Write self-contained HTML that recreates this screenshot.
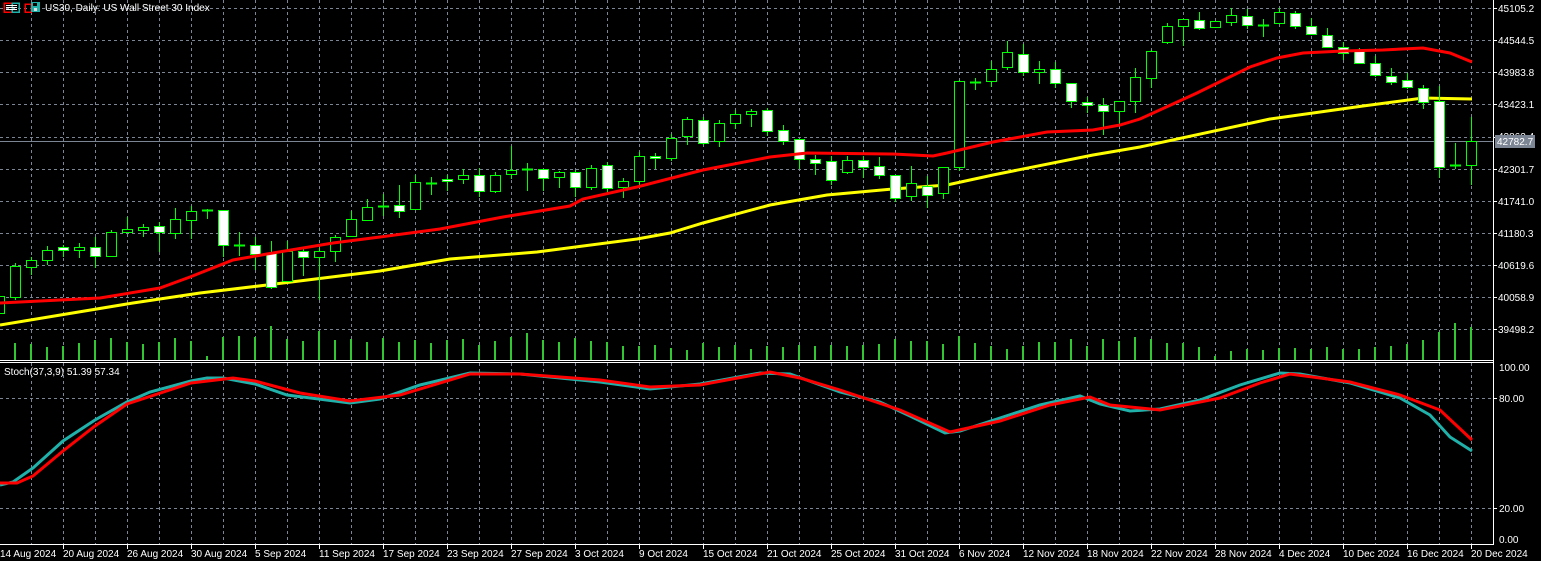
<!DOCTYPE html>
<html><head><meta charset="utf-8"><style>
html,body{margin:0;padding:0;background:#000;width:1541px;height:561px;overflow:hidden}
svg{display:block}
text{font-family:"Liberation Sans",sans-serif;font-size:10px;fill:#fff}
</style></head><body>
<svg id="s" width="1541" height="561" viewBox="0 0 1541 561" xmlns="http://www.w3.org/2000/svg" shape-rendering="crispEdges">
<g id="grid" stroke="#7b8594" stroke-width="1" stroke-dasharray="3,3"></g>
<g id="vol" fill="#32c832"></g>
<line x1="0" y1="141.5" x2="1493" y2="141.5" stroke="#7b8594"/>
<polyline id="yel" fill="none" stroke="#ffff00" stroke-width="3" shape-rendering="auto"/>
<g id="cdl"></g>
<polyline id="red" fill="none" stroke="#ff0000" stroke-width="3" shape-rendering="auto"/>
<polyline id="stT" fill="none" stroke="#20b2aa" stroke-width="3" shape-rendering="auto"/>
<polyline id="stR" fill="none" stroke="#ff0000" stroke-width="3" shape-rendering="auto"/>
<g stroke="#fff" stroke-width="1">
<line x1="0" y1="360.5" x2="1493" y2="360.5"/>
<line x1="0" y1="362.5" x2="1493" y2="362.5"/>
<line x1="0" y1="544.5" x2="1494" y2="544.5"/>
<line x1="1493.5" y1="0" x2="1493.5" y2="545"/>
</g>
<g id="ticks" stroke="#fff"></g>
<!-- header icons -->
<rect x="4" y="3" width="8" height="9" fill="none" stroke="#ff0000" stroke-width="1.5"/>
<rect x="12" y="3" width="7" height="9" fill="none" stroke="#20b2aa" stroke-width="1.5"/>
<line x1="6" y1="5.5" x2="17" y2="5.5" stroke="#fff"/><line x1="6" y1="7.5" x2="17" y2="7.5" stroke="#fff"/><line x1="6" y1="9.5" x2="17" y2="9.5" stroke="#fff"/>
<rect x="25" y="4" width="6" height="8" fill="none" stroke="#ff0000" stroke-width="1.5"/>
<rect x="31" y="2" width="9" height="10" fill="#20b2aa"/>
<rect x="33" y="3" width="4" height="3" fill="#000"/><rect x="34" y="8" width="3" height="3" fill="#ddd"/>
<text x="45" y="11">US30, Daily:  US Wall Street 30 Index</text>
<!-- price axis -->
<g>
<text x="1498" y="12">45105.2</text>
<text x="1498" y="44">44544.5</text>
<text x="1498" y="76">43983.8</text>
<text x="1498" y="108">43423.1</text>
<text x="1498" y="140">42862.4</text>
<text x="1498" y="173">42301.7</text>
<text x="1498" y="205">41741.0</text>
<text x="1498" y="237">41180.3</text>
<text x="1498" y="269">40619.6</text>
<text x="1498" y="301">40058.9</text>
<text x="1498" y="333">39498.2</text>
</g>
<rect x="1495" y="135" width="40" height="13" fill="#7b8594"/>
<text x="1497" y="145" style="fill:#fff">42782.7</text>
<text x="4" y="375">Stoch(37,3,9) 51.39 57.34</text>
<text x="1499" y="371">100.00</text>
<text x="1499" y="402">80.00</text>
<text x="1499" y="512">20.00</text>
<text x="1499" y="543">0.00</text>
<g>
<text x="0" y="557">14 Aug 2024</text>
<text x="63" y="557">20 Aug 2024</text>
<text x="127" y="557">26 Aug 2024</text>
<text x="191" y="557">30 Aug 2024</text>
<text x="255" y="557">5 Sep 2024</text>
<text x="319" y="557">11 Sep 2024</text>
<text x="383" y="557">17 Sep 2024</text>
<text x="447" y="557">23 Sep 2024</text>
<text x="511" y="557">27 Sep 2024</text>
<text x="575" y="557">3 Oct 2024</text>
<text x="639" y="557">9 Oct 2024</text>
<text x="703" y="557">15 Oct 2024</text>
<text x="767" y="557">21 Oct 2024</text>
<text x="831" y="557">25 Oct 2024</text>
<text x="895" y="557">31 Oct 2024</text>
<text x="959" y="557">6 Nov 2024</text>
<text x="1023" y="557">12 Nov 2024</text>
<text x="1087" y="557">18 Nov 2024</text>
<text x="1151" y="557">22 Nov 2024</text>
<text x="1215" y="557">28 Nov 2024</text>
<text x="1279" y="557">4 Dec 2024</text>
<text x="1343" y="557">10 Dec 2024</text>
<text x="1407" y="557">16 Dec 2024</text>
<text x="1471" y="557">20 Dec 2024</text>
</g>
</svg>
<script>
var NS="http://www.w3.org/2000/svg";
function el(p,t,a){var e=document.createElementNS(NS,t);for(var k in a)e.setAttribute(k,a[k]);p.appendChild(e);return e;}
var g=document.getElementById('grid');
for(var x=31;x<=1471;x+=32){el(g,'line',{x1:x+.5,y1:0,x2:x+.5,y2:360});el(g,'line',{x1:x+.5,y1:363,x2:x+.5,y2:544});}
[8,40,72,104,137,169,201,233,265,297,329].forEach(function(y){el(g,'line',{x1:0,y1:y+.5,x2:1493,y2:y+.5});});
[398,508].forEach(function(y){el(g,'line',{x1:0,y1:y+.5,x2:1493,y2:y+.5});});
var tk=document.getElementById('ticks');
[8,40,72,104,137,169,201,233,265,297,329,398,508].forEach(function(y){el(tk,'line',{x1:1493,y1:y+.5,x2:1497,y2:y+.5});});
for(var x=63;x<=1471;x+=64){el(tk,'line',{x1:x+.5,y1:544,x2:x+.5,y2:549});}
// candles: [top,bottom,high,low,bear]
var C=[[296,313,294,318,0],[266,297,263,300,0],[260,267,257,275,0],[250,260,246,265,0],[247,250,245,257,1],[247,250,243,258,0],[247,256,237,268,1],[232,256,230,256,0],[229,232,217,233,0],[227,230,224,237,0],[226,232,222,252,1],[219,233,208,239,0],[211,220,206,239,0],[210,211,209,219,0],[210,245,210,257,1],[245,246,232,256,0],[245,254,237,270,1],[253,287,241,289,1],[251,281,241,281,0],[251,257,248,276,1],[251,257,248,300,0],[237,251,235,262,0],[219,236,211,237,0],[207,220,199,221,0],
[206,207,194,216,0],[205,211,185,218,1],[182,209,175,210,0],[183,184,177,195,0],[179,181,175,191,1],[175,179,169,184,0],[175,191,168,197,1],[175,191,172,193,0],[170,174,146,179,0],[169,170,163,191,0],[169,178,169,191,1],[172,177,171,188,0],[172,187,170,197,1],[168,187,165,190,0],[165,188,162,193,1],[181,187,178,198,0],[156,181,152,185,0],[156,158,153,169,1],[138,158,134,161,0],[119,136,117,145,0],[120,143,117,145,1],[123,141,120,147,0],[114,123,110,129,0],[111,114,109,127,0],[110,131,108,136,1],
[130,141,125,145,1],[139,159,139,169,1],[159,163,155,175,1],[161,180,156,185,1],[160,172,156,174,0],[160,167,156,178,1],[166,175,157,179,1],[175,198,175,202,1],[183,196,166,201,0],[186,195,176,208,1],[167,193,167,199,0],[81,167,80,171,0],[82,83,78,90,0],[69,81,61,87,0],[52,67,41,70,0],[54,72,44,76,1],[69,72,61,84,0],[69,83,62,88,1],[83,101,83,108,1],[102,105,97,113,1],[105,111,98,135,1],[101,111,101,125,0],[77,101,68,113,0],
[51,78,50,88,0],[26,42,23,44,0],[19,26,19,46,0],[20,28,12,30,1],[21,27,21,28,0],[15,22,8,26,0],[16,25,9,29,1],[25,26,19,37,0],[12,23,8,24,0],[13,26,11,29,1],[26,34,18,35,1],[35,47,28,48,1],[47,53,42,60,1],[51,63,48,63,1],[63,75,56,77,1],[76,82,68,85,1],[80,87,73,89,1],[88,102,85,109,1],[101,167,86,178,1],[165,166,143,169,0],[141,165,117,185,0]];
var cg=document.getElementById('cdl');
C.forEach(function(c,i){var x=16*i-1;
 el(cg,'line',{x1:x+.5,y1:c[2],x2:x+.5,y2:c[0],stroke:'#00ff00'});
 el(cg,'line',{x1:x+.5,y1:c[1],x2:x+.5,y2:c[3],stroke:'#00ff00'});
 var h=c[1]-c[0];
 if(h<=1){el(cg,'line',{x1:x-5,y1:c[0]+.5,x2:x+6,y2:c[0]+.5,stroke:'#00ff00',"stroke-width":2});}
 else el(cg,'rect',{x:x-4.5,y:c[0]+.5,width:10,height:h,fill:c[4]?'#fff':'#000',stroke:'#00ff00'});
});
var V=[345,343,344,347,346,343,340,338,342,344,342,338,341,356,337,336,337,326,339,341,331,340,339,342,338,342,340,343,340,339,345,341,337,333,340,342,338,341,342,346,346,345,348,350,343,347,345,349,346,347,345,346,345,346,345,344,339,341,341,344,336,343,346,349,346,342,342,339,346,339,341,337,339,343,343,347,356,351,349,350,348,348,349,347,349,349,347,346,344,340,332,323,327];
var vg=document.getElementById('vol');
V.forEach(function(t,i){var x=16*i-1;el(vg,'rect',{x:x-1,y:t,width:2,height:360-t});});
function pl(id,pts){document.getElementById(id).setAttribute('points',pts.map(function(p){return p.join(',')}).join(' '));}
pl('red',[[0,303],[40,301],[100,298],[160,288],[190,277],[233,260],[267,254],[333,243],[380,237],[440,229],[503,217],[570,206],[583,199],[637,187],[703,170],[770,157],[807,153],[893,154],[933,156],[947,153],[993,142],[1047,132],[1093,130],[1120,125],[1140,119],[1197,93],[1250,67],[1277,58],[1303,53],[1343,51],[1383,50],[1423,48],[1450,53],[1472,62]]);
pl('yel',[[0,325],[133,303],[200,293],[267,285],[380,271],[450,259],[537,252],[637,239],[670,233],[703,223],[770,205],[827,195],[893,189],[947,185],[993,175],[1093,155],[1140,147],[1270,119],[1363,106],[1423,98],[1472,99]]);
pl('stT',[[0,485],[13,482],[33,468],[63,441],[95,420],[127,402],[150,392],[191,381],[207,378],[223,378],[255,384],[287,395],[350,403],[380,399],[420,385],[470,373],[520,374],[600,382],[650,389],[700,384],[760,373],[790,374],[840,392],[880,402],[910,416],[945,433],[960,431],[1000,418],[1040,405],[1080,396],[1100,404],[1130,411],[1160,409],[1200,400],[1240,385],[1280,373],[1300,374],[1350,383],[1400,398],[1430,415],[1450,437],[1472,451]]);
pl('stR',[[0,483],[17,483],[33,476],[63,451],[95,426],[127,404],[191,383],[233,378],[255,381],[300,393],[350,401],[400,395],[470,374],[520,374],[600,380],[650,387],[700,385],[770,372],[800,378],[840,390],[900,410],[950,432],[1000,421],[1050,405],[1090,397],[1110,405],[1160,410],[1220,398],[1260,383],[1290,374],[1350,382],[1400,395],[1440,410],[1472,440]]);
</script>
</body></html>
